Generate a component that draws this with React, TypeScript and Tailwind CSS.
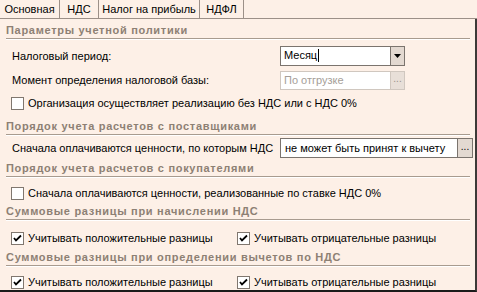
import React from "react";

const font = { fontFamily: '"Liberation Sans", Arial, sans-serif' };

function Header({ text, h }: { text: string; h: string }) {
  return (
    <div className={`mx-[6px] mr-[5px] ${h} flex items-end border-b border-[#a89b8f] shadow-[0_1px_0_#ffffff] shrink-0`}>
      <span className="text-[11px] leading-[14px] font-bold tracking-[0.7px] text-[#8d8074] pb-[1px] whitespace-nowrap">{text}</span>
    </div>
  );
}

function Check({ checked }: { checked?: boolean }) {
  return (
    <div className="w-[13px] h-[13px] border border-[#80776f] bg-white flex items-center justify-center shrink-0">
      {checked && (
        <svg width="9" height="9" viewBox="0 0 9 9">
          <path d="M1 4 L3 6.5 L8 1.5" stroke="#000" strokeWidth="1.8" fill="none" />
        </svg>
      )}
    </div>
  );
}

function CheckRow({ text, checked, className }: { text: string; checked?: boolean; className?: string }) {
  return (
    <div className={`flex items-center gap-[4px] ${className ?? ""}`}>
      <Check checked={checked} />
      <span className="text-[11px] leading-[14px] text-black whitespace-nowrap">{text}</span>
    </div>
  );
}

export default function App() {
  return (
    <div style={font} className="w-[477px] h-[292px] bg-[#fdf0e7] flex flex-col overflow-hidden relative">
      {/* tabs */}
      <div className="h-[19px] shrink-0 flex items-stretch border-b border-[#9c9088] text-[11px] text-black whitespace-nowrap">
        <div className="w-[60px] flex items-center justify-center border-r border-[#9c9088]">Основная</div>
        <div className="w-[39px] flex items-center justify-center border-r border-[#9c9088]">НДС</div>
        <div className="w-[101px] flex items-center justify-center border-r border-[#9c9088]">Налог на прибыль</div>
        <div className="w-[44px] flex items-center justify-center border-r border-[#9c9088]">НДФЛ</div>
        <div className="flex-1" />
      </div>

      <div className="flex-1 flex flex-col border-r-2 border-[#3d3a38] border-b-2 border-b-[#1a1a1a]">
        <Header text="Параметры учетной политики" h="h-[20px]" />

        <div className="mt-[6px] h-[21px] flex items-center pl-[12px] shrink-0">
          <span className="w-[268px] text-[11px] leading-[14px]">Налоговый период:</span>
          <div className="w-[125px] h-[20px] border border-[#7b746e] bg-white flex">
            <div className="flex-1 flex items-center pl-[3px] text-[11px]">
              Месяц<span className="w-[1px] h-[13px] bg-black ml-[1px]" />
            </div>
            <div className="w-[14px] border-l border-[#7b746e] bg-[#e3d9d1] flex items-center justify-center">
              <svg width="7" height="4" viewBox="0 0 7 4"><path d="M0 0 H7 L3.5 4 Z" fill="#000" /></svg>
            </div>
          </div>
        </div>

        <div className="mt-[4px] h-[20px] flex items-center pl-[12px] shrink-0">
          <span className="w-[268px] text-[11px] leading-[14px]">Момент определения налоговой базы:</span>
          <div className="w-[125px] h-[19px] border border-[#d0c7bf] bg-white flex">
            <div className="flex-1 flex items-center pl-[3px] text-[11px] text-[#a59e98]">По отгрузке</div>
            <div className="w-[14px] border-l border-[#d0c7bf] bg-[#e8dfd8] flex items-center justify-center text-[10px] text-[#9a918a] leading-none pb-[2px]">...</div>
          </div>
        </div>

        <CheckRow className="mt-[4px] h-[18px] pl-[11px] shrink-0" text="Организация осуществляет реализацию без НДС или с НДС 0%" />

        <Header text="Порядок учета расчетов с поставщиками" h="h-[23px]" />

        <div className="mt-[3px] h-[20px] flex items-center pl-[12px] shrink-0">
          <span className="w-[268px] text-[11px] leading-[14px] whitespace-nowrap">Сначала оплачиваются ценности, по которым НДС</span>
          <div className="w-[193px] h-[20px] border border-[#7b746e] bg-white flex">
            <div className="flex-1 flex items-center pl-[4px] text-[11px] whitespace-nowrap">не может быть принят к вычету</div>
            <div className="w-[15px] border-l border-[#7b746e] bg-[#e3d9d1] flex items-center justify-center text-[10px] text-black leading-none pb-[2px]">...</div>
          </div>
        </div>

        <Header text="Порядок учета расчетов с покупателями" h="h-[19px]" />

        <CheckRow className="mt-[7px] h-[18px] pl-[11px] shrink-0" text="Сначала оплачиваются ценности, реализованные по ставке НДС 0%" />

        <Header text="Суммовые разницы при начислении НДС" h="h-[18px]" />

        <div className="mt-[9px] h-[18px] flex items-center pl-[11px] shrink-0">
          <CheckRow className="w-[226px]" checked text="Учитывать положительные разницы" />
          <CheckRow checked text="Учитывать отрицательные разницы" />
        </div>

        <Header text="Суммовые разницы при определении вычетов по НДС" h="h-[19px]" />

        <div className="mt-[8px] h-[16px] flex items-center pl-[11px] shrink-0">
          <CheckRow className="w-[226px]" checked text="Учитывать положительные разницы" />
          <CheckRow checked text="Учитывать отрицательные разницы" />
        </div>
      </div>
    </div>
  );
}
